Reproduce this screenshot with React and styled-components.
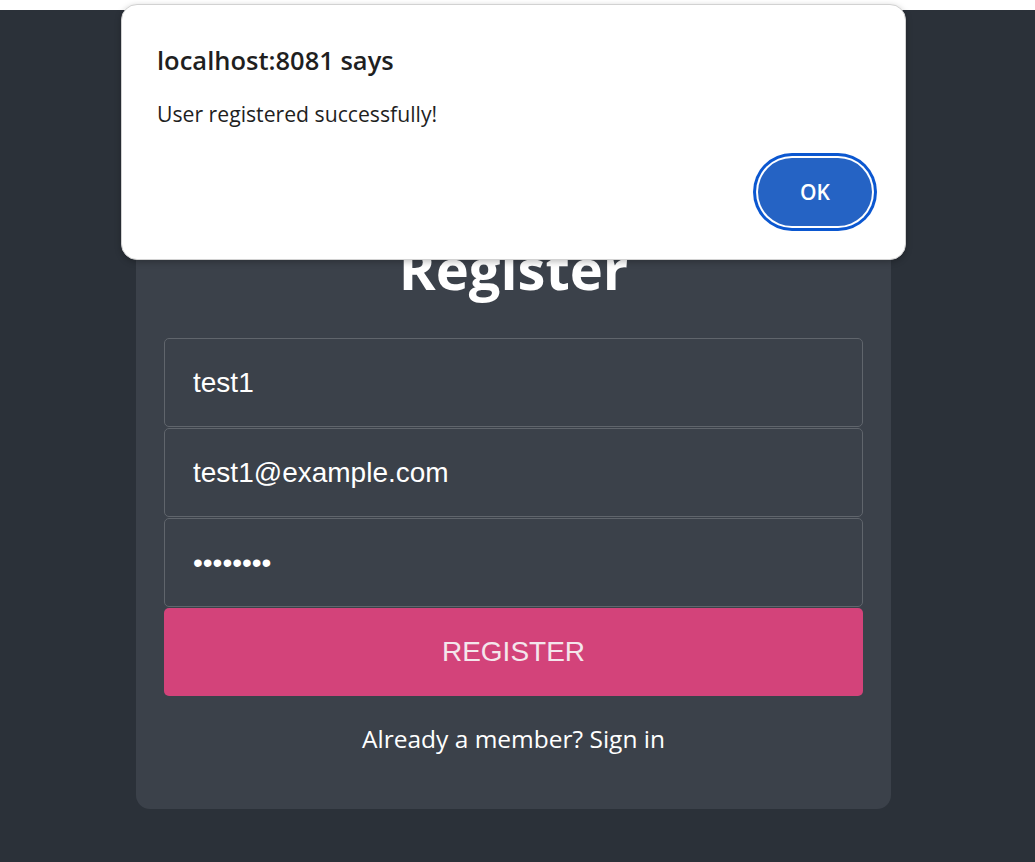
import React from "react";
import styled, { createGlobalStyle } from "styled-components";

const GlobalStyle = createGlobalStyle`
  html, body {
    margin: 0;
    padding: 0;
    background: #ffffff;
  }
  * {
    box-sizing: border-box;
  }
`;

const Page = styled.div`
  position: relative;
  width: 1035px;
  height: 862px;
  padding-top: 10px;
  overflow: hidden;
`;

const Backdrop = styled.main`
  height: 852px;
  background: #2b3139;
  padding: 174px 144px 0 136px;
`;

const Card = styled.form`
  width: 755px;
  background: #3b414a;
  border-radius: 14px;
  padding: 44px 28px 53px;
  display: flex;
  flex-direction: column;
`;

const Title = styled.h1`
  margin: 0 0 30px;
  text-align: center;
  font-family: "Open Sans", sans-serif;
  font-weight: 700;
  font-size: 56px;
  line-height: 80px;
  color: #ffffff;
`;

const Fields = styled.div`
  display: flex;
  flex-direction: column;
  gap: 1px;
`;

const Input = styled.input`
  height: 89px;
  width: 100%;
  padding: 0 28px;
  background: #3b414a;
  border: 1px solid #60656c;
  border-radius: 5px;
  color: #ffffff;
  font-family: "Liberation Sans", Arial, sans-serif;
  font-size: 28px;
  outline: none;
`;

const SubmitButton = styled.button`
  height: 88px;
  width: 100%;
  border: none;
  border-radius: 5px;
  background: #d3437a;
  color: #f4e6ec;
  font-family: "Liberation Sans", Arial, sans-serif;
  font-size: 28px;
  text-transform: uppercase;
`;

const Footer = styled.p`
  margin: 26px 0 0;
  text-align: center;
  font-family: "Open Sans", sans-serif;
  font-size: 24.5px;
  line-height: 34px;
  color: #ffffff;
`;

const Dialog = styled.div`
  position: absolute;
  left: 121px;
  top: 4px;
  width: 785px;
  height: 256px;
  background: #ffffff;
  border: 1px solid #d2d2d2;
  border-radius: 16px;
  box-shadow: 0 2px 6px rgba(0, 0, 0, 0.25);
  padding: 38px 33px 0 35px;
  display: flex;
  flex-direction: column;
`;

const DialogTitle = styled.div`
  font-family: "Open Sans", sans-serif;
  font-weight: 600;
  font-size: 25.5px;
  line-height: 34px;
  color: #1f1f1f;
`;

const DialogMessage = styled.div`
  margin-top: 23px;
  font-family: "Open Sans", sans-serif;
  font-size: 21.2px;
  line-height: 28px;
  color: #1f1f1f;
`;

const DialogActions = styled.div`
  display: flex;
  justify-content: flex-end;
  margin-top: 30px;
`;

const OkButton = styled.button`
  width: 114px;
  height: 68px;
  border: none;
  border-radius: 34px;
  background: #2563c4;
  color: #ffffff;
  font-family: "Open Sans", sans-serif;
  font-weight: 600;
  font-size: 21px;
  box-shadow: 0 0 0 2px #ffffff, 0 0 0 5px #0b57d0;
`;

export default function App() {
  return (
    <>
      <GlobalStyle />
      <Page>
        <Backdrop>
          <Card onSubmit={(e) => e.preventDefault()}>
            <Title>Register</Title>
            <Fields>
              <Input type="text" defaultValue="test1" />
              <Input type="email" defaultValue="test1@example.com" />
              <Input type="password" defaultValue="password" />
              <SubmitButton type="submit">Register</SubmitButton>
            </Fields>
            <Footer>Already a member? Sign in</Footer>
          </Card>
        </Backdrop>
        <Dialog role="alertdialog">
          <DialogTitle>localhost:8081 says</DialogTitle>
          <DialogMessage>User registered successfully!</DialogMessage>
          <DialogActions>
            <OkButton type="button">OK</OkButton>
          </DialogActions>
        </Dialog>
      </Page>
    </>
  );
}
